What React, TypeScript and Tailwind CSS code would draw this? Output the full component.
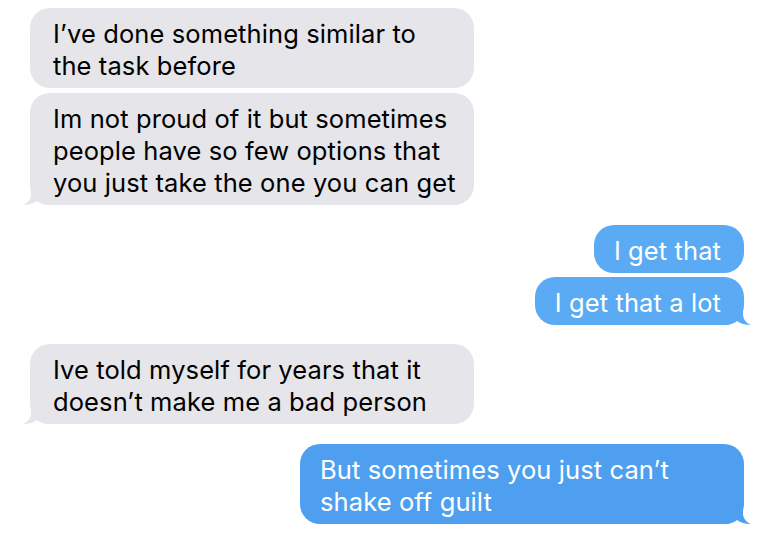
type Side = 'in' | 'out';

interface Msg {
  side: Side;
  lines: string[];
  tail?: boolean;
  gap: string;
}

const messages: Msg[] = [
  { side: 'in', lines: ['I\u2019ve done something similar to', 'the task before'], gap: 'mt-[8px]' },
  {
    side: 'in',
    lines: ['Im not proud of it but sometimes', 'people have so few options that', 'you just take the one you can get'],
    tail: true,
    gap: 'mt-[5px]',
  },
  { side: 'out', lines: ['I get that'], gap: 'mt-[20px]' },
  { side: 'out', lines: ['I get that a lot'], tail: true, gap: 'mt-[4px]' },
  { side: 'in', lines: ['Ive told myself for years that it', 'doesn\u2019t make me a bad person'], tail: true, gap: 'mt-[19px]' },
  { side: 'out', lines: ['But sometimes you just can\u2019t', 'shake off guilt'], tail: true, gap: 'mt-[20px]' },
];

function Tail({ side, color }: { side: Side; color: string }) {
  const isIn = side === 'in';
  return (
    <svg
      width="28"
      height="24"
      viewBox="0 0 28 24"
      className={`absolute bottom-0 ${isIn ? 'left-[-7px]' : 'right-[-7px] -scale-x-100'} ${color}`}
    >
      <path d="M8 0 L8 13 C8 18.5 5 22 0 24 C6 24 10.5 22.5 14 20 C17 22.5 21 24 28 24 L28 0 Z" />
    </svg>
  );
}

function Bubble({ msg, multi }: { msg: Msg; multi: boolean }) {
  const isIn = msg.side === 'in';
  const bg = isIn ? 'bg-[#e5e5ea]' : multi ? 'bg-[#4f9ff0]' : 'bg-[#5aabf4]';
  const fill = isIn ? 'fill-[#e5e5ea]' : multi ? 'fill-[#4f9ff0]' : 'fill-[#5aabf4]';
  return (
    <div className={`flex ${isIn ? 'justify-start pl-[30px]' : 'justify-end pr-[26px]'} ${msg.gap}`}>
      <div
        className={`relative rounded-[20px] pt-[10px] pb-[6px] text-[25.5px] leading-[32px] tracking-[0.1px] whitespace-nowrap ${
          multi ? 'w-[444px]' : 'w-fit'
        } ${isIn ? 'pl-[23px] pr-[20px] text-black' : 'pl-[20px] pr-[23px] text-white'} ${bg}`}
      >
        {msg.tail && <Tail side={msg.side} color={fill} />}
        <div className="relative">
          {msg.lines.map((l, i) => (
            <div key={i}>{l}</div>
          ))}
        </div>
      </div>
    </div>
  );
}

export default function App() {
  return (
    <div
      className="w-[770px] h-[536px] bg-white overflow-hidden flex flex-col"
      style={{ fontFamily: 'Inter, "Noto Sans", sans-serif' }}
    >
      {messages.map((m, i) => (
        <Bubble key={i} msg={m} multi={m.lines.length > 1} />
      ))}
    </div>
  );
}
